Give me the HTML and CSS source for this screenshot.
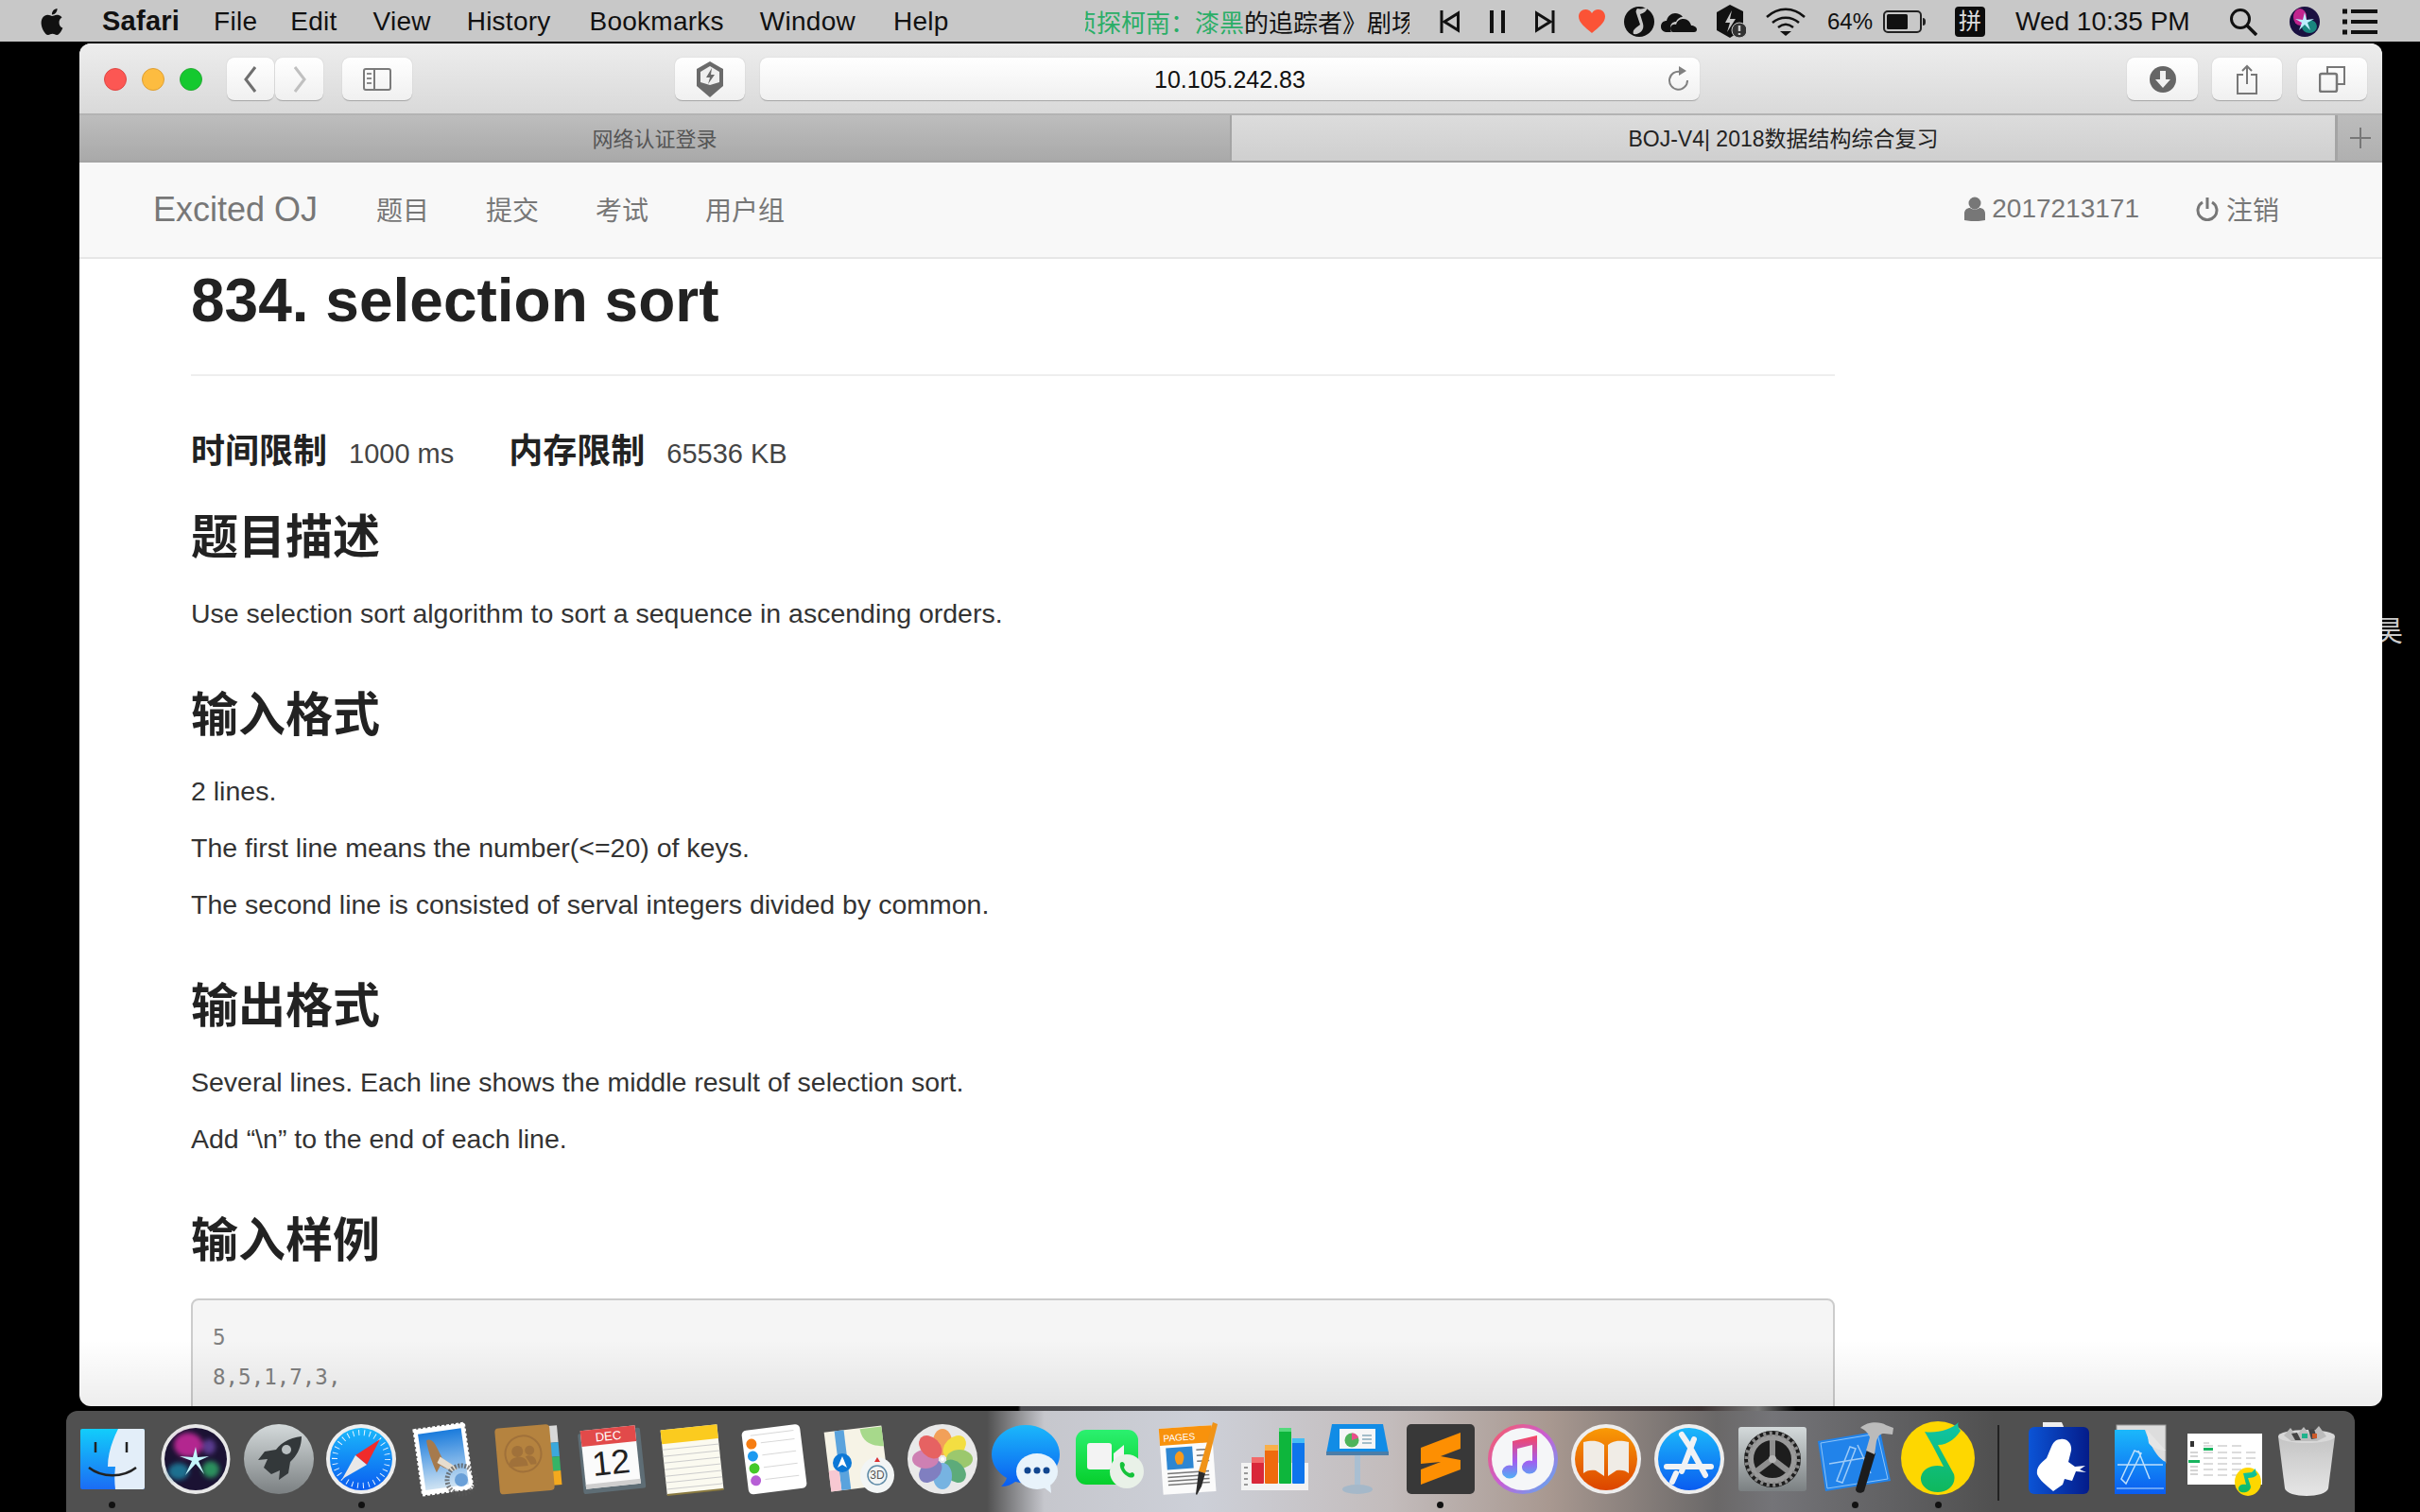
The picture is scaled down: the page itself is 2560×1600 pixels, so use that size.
FILE: index.html
```html
<!DOCTYPE html>
<html lang="en">
<head>
    <meta charset="UTF-8">
    <title>Excited OJ</title>
    <link rel="stylesheet" href="styles.css">
</head>
<body>

<svg class="defs" width="0" height="0">
    <defs>
        <linearGradient id="gFinder" x1="0" y1="0" x2="0" y2="1"><stop offset="0" stop-color="#12cdfb"/><stop offset="1" stop-color="#1b6cf4"/></linearGradient>
        <linearGradient id="gBlue" x1="0" y1="0" x2="0" y2="1"><stop offset="0" stop-color="#1bb8fb"/><stop offset="1" stop-color="#0a5cf0"/></linearGradient>
        <linearGradient id="gSky" x1="0" y1="0" x2="0" y2="1"><stop offset="0" stop-color="#1a7bdc"/><stop offset="1" stop-color="#cfe3f3"/></linearGradient>
        <linearGradient id="gSteel" x1="0" y1="0" x2="0" y2="1"><stop offset="0" stop-color="#d4dadb"/><stop offset="1" stop-color="#7b8082"/></linearGradient>
        <linearGradient id="gMusic" x1="0" y1="0" x2="1" y2="1"><stop offset="0" stop-color="#fb5c5c"/><stop offset=".5" stop-color="#c95ed6"/><stop offset="1" stop-color="#4fb5f5"/></linearGradient>
        <linearGradient id="gNote" x1="0" y1="0" x2="0" y2="1"><stop offset="0" stop-color="#f9455f"/><stop offset=".6" stop-color="#a35df0"/><stop offset="1" stop-color="#4fb0f5"/></linearGradient>
        <linearGradient id="gBook" x1="0" y1="0" x2="0" y2="1"><stop offset="0" stop-color="#f99a06"/><stop offset="1" stop-color="#dc4400"/></linearGradient>
        <linearGradient id="gGreen" x1="0" y1="0" x2="0" y2="1"><stop offset="0" stop-color="#2bf06f"/><stop offset="1" stop-color="#06cf2c"/></linearGradient>
        <linearGradient id="gQQ" x1="0" y1="0" x2="0" y2="1"><stop offset="0" stop-color="#10c4a8"/><stop offset="1" stop-color="#0fb85c"/></linearGradient>
        <linearGradient id="gFrog" x1="0" y1="0" x2="1" y2="0"><stop offset="0" stop-color="#0b54d6"/><stop offset="1" stop-color="#041c8a"/></linearGradient>
        <linearGradient id="gTrash" x1="0" y1="0" x2="0" y2="1"><stop offset="0" stop-color="#c4c4c4"/><stop offset="1" stop-color="#e6e6e6"/></linearGradient>
        <filter id="soft"><feGaussianBlur stdDeviation="2.500"/></filter>
    </defs>
</svg>

<!-- 顶部菜单栏 -->
<div class="menubar">
    <svg class="apple" viewBox="2 2 20 20"><path d="M18.71 19.5c-.83 1.24-1.71 2.45-3.05 2.47-1.34.03-1.77-.79-3.29-.79-1.53 0-2 .77-3.27.82-1.31.05-2.3-1.32-3.14-2.53C4.25 17 2.94 12.45 4.7 9.39c.87-1.52 2.43-2.48 4.12-2.51 1.28-.02 2.5.87 3.29.87.78 0 2.26-1.07 3.81-.91.65.03 2.47.26 3.64 1.98-.09.06-2.17 1.28-2.15 3.81.03 3.02 2.65 4.03 2.68 4.04-.03.07-.42 1.44-1.38 2.83M13 3.5c.73-.83 1.94-1.46 2.94-1.5.13 1.17-.34 2.35-1.04 3.19-.69.85-1.83 1.51-2.95 1.42-.15-1.15.41-2.35 1.05-3.11z"/></svg>
    <b class="app-name">Safari</b>
    <span class="m-file">File</span>
    <span class="m-edit">Edit</span>
    <span>View</span>
    <span>History</span>
    <span class="m-books">Bookmarks</span>
    <span>Window</span>
    <span class="m-help">Help</span>

    <div class="status">
        <div class="ticker"><span class="ticker-text"><em>侦探柯南：漆黑</em>的追踪者》剧场</span></div>
        <svg class="st st-prev" viewBox="0 0 21 24"><path d="M2 0v24" stroke="#111" stroke-width="3"/><path d="M19.5 3v18L5 12z" fill="none" stroke="#111" stroke-width="3"/></svg>
        <svg class="st st-pause" viewBox="0 0 16 24"><path d="M2 0v24M14 0v24" stroke="#111" stroke-width="4"/></svg>
        <svg class="st st-next" viewBox="0 0 21 24"><path d="M19 0v24" stroke="#111" stroke-width="3"/><path d="M1.5 3v18L16 12z" fill="none" stroke="#111" stroke-width="3"/></svg>
        <svg class="st st-heart" viewBox="0 0 28 26"><path d="M14 25C7 19 0 14 0 7.5 0 3 3.400 0 7.300 0 10 0 12.600 1.300 14 4 15.400 1.300 18 0 20.700 0 24.600 0 28 3 28 7.500 28 14 21 19 14 25z" fill="#fb5336"/></svg>
        <svg class="st st-qq" viewBox="0 0 32 32"><circle cx="16" cy="16" r="16" fill="#111"/><path d="M14 2c4 1 8 0 11-2-1 5-4 7-8 8l3 10c2 7-4 12-10 11-2-5 5-8 7-10l-4-12c-1-2 0-4 1-5z" fill="#c8c8c8"/></svg>
        <svg class="st st-cloud" viewBox="0 0 38 24"><path d="M7 23c-4 0-7-2-7-6s3-6 6-6c1-5 5-8 9-8 3 0 6 1 8 4-3 0-6 2-7 5-3 0-6 2-6 6 0 2 0 4 1 5z" fill="#111"/><path d="M13 23c-2 0-3-2-3-4 0-3 3-5 6-4 1-4 4-6 8-6s7 3 8 7c3 0 6 2 6 4s-1 3-3 3z" fill="#111"/></svg>
        <svg class="st st-shield" viewBox="0 0 32 36"><path d="M15 0l14 7v19l-14 9-14-8V8z" fill="#111"/><path d="M17 6l-7 13h5l-3 10 9-14h-6z" fill="#c8c8c8"/><circle cx="25" cy="27" r="8" fill="#333" stroke="#c8c8c8" stroke-width="1"/><path d="M25 22v6M25 30v2" stroke="#c8c8c8" stroke-width="2.500"/></svg>
        <svg class="st st-wifi" viewBox="0 0 42 30"><path d="M1 10c12-11 28-11 40 0M7 16c8-7 20-7 28 0M13 21c5-4 11-4 16 0" fill="none" stroke="#111" stroke-width="2.500"/><path d="M15 25h12l-6 5z" fill="#111"/></svg>
        <span class="st-pct">64%</span>
        <svg class="st st-batt" viewBox="0 0 45 24"><rect x="1" y="1" width="39" height="22" rx="4" fill="none" stroke="#222" stroke-width="2"/><rect x="4" y="4" width="22" height="16" rx="1.500" fill="#111"/><path d="M42 8c2 0 3 1 3 4s-1 4-3 4z" fill="#222"/></svg>
        <span class="st-input">拼</span>
        <span class="st-clock">Wed 10:35 PM</span>
        <svg class="st st-search" viewBox="0 0 30 30"><circle cx="12" cy="12" r="9.500" fill="none" stroke="#111" stroke-width="3"/><path d="M19 19l10 10" stroke="#111" stroke-width="3.500"/></svg>
        <svg class="st st-siri" viewBox="0 0 32 32"><circle cx="16" cy="16" r="16" fill="#1a1040"/><ellipse cx="11" cy="11" rx="7" ry="9" fill="#c2258f"/><ellipse cx="21" cy="21" rx="8" ry="7" fill="#19857e"/><path d="M16 6l2 8 8-1-7 4 3 8-6-6-6 6 3-8-7-4 8 1z" fill="#bdeeff"/></svg>
        <svg class="st st-list" viewBox="0 0 37 30"><path d="M9 4h28M9 15h28M9 26h28" stroke="#111" stroke-width="4"/><path d="M0 4h5M0 15h5M0 26h5" stroke="#111" stroke-width="5"/></svg>
    </div>
</div>

<div class="desktop">
    <div class="window">
        <!-- Safari 工具栏 -->
        <div class="toolbar">
            <i class="light light-red"></i>
            <i class="light light-yellow"></i>
            <i class="light light-green"></i>
            <button class="tool tool-back"><svg width="14" height="30" viewBox="0 0 14 30"><path d="M12 2L2 15l10 13" fill="none" stroke="#6f6f6f" stroke-width="3"/></svg></button>
            <button class="tool tool-fwd"><svg width="14" height="30" viewBox="0 0 14 30"><path d="M2 2l10 13L2 28" fill="none" stroke="#c0c0c0" stroke-width="3"/></svg></button>
            <button class="tool tool-side"><svg width="30" height="24" viewBox="0 0 30 24"><rect x="1" y="1" width="28" height="22" rx="2" fill="none" stroke="#7a7a7a" stroke-width="2"/><path d="M12 1v22" stroke="#7a7a7a" stroke-width="2"/><path d="M4 6h5M4 11h5M4 16h5" stroke="#8a8a8a" stroke-width="2"/></svg></button>
            <button class="tool tool-shield"><svg width="32" height="38" viewBox="0 0 32 38"><path d="M16 0l14 8v18l-14 12L2 26V8z" fill="#6a6a6a"/><path d="M16 5l10 6v11l-10 3-10-3V11z" fill="#efefef"/><path d="M18 7l-6 10h4l-2 7 7-10h-4z" fill="#6a6a6a"/></svg></button>
            <div class="address">
                <span class="url">10.105.242.83</span>
                <svg class="reload" width="24" height="28" viewBox="0 0 24 28"><path d="M15 6a9.500 9.500 0 1 0 7 9" fill="none" stroke="#808080" stroke-width="2"/><path d="M13 0l8 5-8 5z" fill="#808080"/></svg>
            </div>
            <button class="tool tool-down"><svg width="28" height="28" viewBox="0 0 28 28"><circle cx="14" cy="14" r="14" fill="#666"/><path d="M11 5h6v9h5l-8 9-8-9h5z" fill="#f0f0f0"/></svg></button>
            <button class="tool tool-share"><svg width="24" height="32" viewBox="0 0 24 32"><path d="M8 11H2v20h20V11h-6" fill="none" stroke="#777" stroke-width="2"/><path d="M12 2v19M7 7l5-5 5 5" fill="none" stroke="#777" stroke-width="2"/></svg></button>
            <button class="tool tool-tabs"><svg width="28" height="28" viewBox="0 0 28 28"><path d="M9 7V1h18v18h-7" fill="none" stroke="#777" stroke-width="2"/><rect x="1" y="8" width="18" height="19" rx="2" fill="none" stroke="#777" stroke-width="2.500"/></svg></button>
        </div>

        <!-- 标签栏 -->
        <div class="tabs">
            <div class="tab tab-off">网络认证登录</div>
            <div class="tab tab-on">BOJ-V4| 2018数据结构综合复习</div>
            <div class="tab-add"><svg width="22" height="22" viewBox="0 0 22 22"><path d="M11 0v22M0 11h22" stroke="#777" stroke-width="2"/></svg></div>
        </div>

        <!-- 站点导航 -->
        <div class="navbar">
            <span class="brand">Excited OJ</span>
            <span class="nav-item">题目</span>
            <span class="nav-item">提交</span>
            <span class="nav-item">考试</span>
            <span class="nav-item">用户组</span>
            <span class="nav-user">
                <svg width="22" height="26" viewBox="0 0 22 26"><circle cx="11" cy="7" r="6.500" fill="#777"/><path d="M0 25v-7c0-4 3-6 6-6 3 2 7 2 10 0 3 0 6 2 6 6v7c-6 1.500-16 1.500-22 0z" fill="#777"/></svg>
                2017213171
            </span>
            <span class="nav-logout">
                <svg width="24" height="26" viewBox="0 0 24 26"><path d="M7 6a10 10 0 1 0 10 0" fill="none" stroke="#777" stroke-width="3"/><path d="M12 1v12" stroke="#777" stroke-width="3"/></svg>
                注销
            </span>
        </div>

        <!-- 题目内容 -->
        <div class="page">
            <div class="problem">
                <h1>834. selection sort</h1>
                <div class="rule"></div>
                <div class="limits">
                    <b>时间限制</b><span class="limit-value">1000 ms</span>
                    <b>内存限制</b><span class="limit-value">65536 KB</span>
                </div>
                <h3 class="first">题目描述</h3>
                <p>Use selection sort algorithm to sort a sequence in ascending orders.</p>
                <h3>输入格式</h3>
                <p>2 lines.</p>
                <p>The first line means the number(&lt;=20) of keys.</p>
                <p>The second line is consisted of serval integers divided by common.</p>
                <h3>输出格式</h3>
                <p>Several lines. Each line shows the middle result of selection sort.</p>
                <p>Add “\n” to the end of each line.</p>
                <h3>输入样例</h3>
                <pre>5
8,5,1,7,3,
</pre>
            </div>
            <div class="fade"></div>
        </div>
    </div>
    <div class="side"><span>昊</span></div>
</div>

<div class="strip"></div>

<!-- Dock -->
<div class="dock">
    <div class="tile">
        <svg viewBox="0 0 88 78"><rect x="10" y="7" width="68" height="64" rx="2" fill="url(#gFinder)"/><path d="M50 7h26a2 2 0 0 1 2 2v60a2 2 0 0 1-2 2H47c-1-8-1-14 0-24h-8c0-14 5-28 11-40z" fill="#e3eef9"/><path d="M26 21v11M59 21v11" stroke="#222" stroke-width="2.500"/><path d="M19 48c14 11 36 11 50 0" fill="none" stroke="#222" stroke-width="2.500"/></svg>
        <i class="dot"></i>
    </div>
    <div class="tile">
        <svg viewBox="0 0 88 78"><ellipse cx="44" cy="39" rx="36.500" ry="37" fill="#e8e8e8"/><circle cx="44" cy="39" r="33" fill="#1b1233"/><g filter="url(#soft)"><ellipse cx="36" cy="24" rx="15" ry="13" fill="#b3278f"/><ellipse cx="60" cy="50" rx="9" ry="9" fill="#2a8f5d"/><ellipse cx="26" cy="52" rx="11" ry="9" fill="#1c6f8f"/><ellipse cx="58" cy="26" rx="7" ry="8" fill="#5a3a8f"/></g><path d="M44 26l2 11 12-1-11 5 6 14-9-11-11 12 7-15-13-5 14 1z" fill="#c4f5fb"/></svg>
    </div>
    <div class="tile">
        <svg viewBox="0 0 88 78"><circle cx="44" cy="39" r="37" fill="url(#gSteel)"/><path d="M68 15c-11 1-21 6-27 14l-12 2-7 9 10-1-4 9 8 7 9-4-1 10 10-7 2-12c8-7 12-17 12-27z" fill="#33383a"/><circle cx="52" cy="29" r="5" fill="#b9bfc1"/></svg>
    </div>
    <div class="tile">
        <svg viewBox="0 0 88 78"><circle cx="44" cy="39" r="37" fill="#eee"/><circle cx="44" cy="39" r="33" fill="url(#gBlue)"/><circle cx="44" cy="39" r="28" fill="none" stroke="#e6f2ff" stroke-width="6" stroke-dasharray="1 4.860"/><path d="M64 18L38 35l12 10z" fill="#f02b2b"/><path d="M24 60l14-25 12 10z" fill="#e8e8e8"/></svg>
        <i class="dot"></i>
    </div>
    <div class="tile">
        <svg viewBox="0 0 88 78"><g transform="rotate(-8 44 39)"><rect x="16" y="4" width="54" height="70" fill="#fff" stroke="#fff" stroke-width="2" stroke-dasharray="3 2"/><rect x="20" y="9" width="46" height="60" fill="url(#gSky)"/><path d="M28 17c4-2 8 2 10 9l4 12 14 13c-6 1-12-1-17-6l-5 7c-3-10-6-24-6-35z" fill="#a67a4d"/><path d="M40 36l17 15-7 2-14-11z" fill="#e6ddcf"/></g><circle cx="62" cy="61" r="15" fill="none" stroke="#555" stroke-width="5" stroke-dasharray="2 1.500" opacity=".75"/><circle cx="62" cy="61" r="7" fill="#6aa0d8"/></svg>
    </div>
    <div class="tile">
        <svg viewBox="0 0 88 78"><g transform="rotate(-5 44 39)"><rect x="65" y="6" width="13" height="18" fill="#d8d8d8"/><rect x="65" y="24" width="13" height="15" fill="#3ba8dc"/><rect x="65" y="39" width="13" height="15" fill="#36b466"/><rect x="65" y="54" width="13" height="15" fill="#f4a91e"/><rect x="12" y="4" width="58" height="70" rx="4" fill="#b5833f"/><circle cx="40" cy="33" r="19" fill="none" stroke="#a0713a" stroke-width="2"/><circle cx="34" cy="30" r="6" fill="#a0713a"/><path d="M24 46c0-8 5-10 10-10s10 2 10 10z" fill="#a0713a"/><circle cx="47" cy="30" r="5" fill="#a0713a"/><path d="M42 36c6-2 12 2 11 9h-6z" fill="#a0713a"/></g></svg>
    </div>
    <div class="tile">
        <svg viewBox="0 0 88 78"><g transform="rotate(-6 44 39)"><rect x="12" y="9" width="66" height="64" rx="2" fill="#5e6d75"/><rect x="15" y="6" width="58" height="62" fill="#fbfbfb"/><rect x="15" y="6" width="58" height="17" fill="#e24a4a"/><text class="ico-text ico-dec" x="44" y="19" text-anchor="middle">DEC</text><text class="ico-text ico-day" x="44" y="55" text-anchor="middle">12</text><rect x="15" y="63" width="58" height="5" fill="#cfcfcf"/></g></svg>
    </div>
    <div class="tile">
        <svg viewBox="0 0 88 78"><g transform="rotate(-6 44 39)"><rect x="13" y="5" width="60" height="69" fill="#fbfaf0"/><rect x="13" y="5" width="60" height="15" fill="#fbcb1f"/><path d="M13 26h60M13 33h60M13 40h60M13 47h60M13 54h60M13 61h60M13 68h60" stroke="#ccc" stroke-width="1"/><rect x="13" y="73" width="60" height="2" fill="#8a7a40"/></g></svg>
    </div>
    <div class="tile">
        <svg viewBox="0 0 88 78"><g transform="rotate(-7 44 39)"><rect x="11" y="5" width="62" height="68" rx="5" fill="#fff"/><circle cx="20" cy="20" r="5.500" fill="#f67d12"/><circle cx="20" cy="33" r="5.500" fill="#1d9af0"/><circle cx="20" cy="46" r="5.500" fill="#44c92a"/><circle cx="20" cy="59" r="5.500" fill="#b75fd6"/><path d="M30 20h36M30 33h36M30 46h36M30 59h36M20 11h46" stroke="#d8d8d8" stroke-width="1"/></g></svg>
    </div>
    <div class="tile">
        <svg viewBox="0 0 88 78"><g transform="rotate(-7 40 36)"><rect x="10" y="7" width="61" height="63" fill="#f6f3e6"/><path d="M48 8c1 13 8 19 23 21V8z" fill="#a7d98b"/><rect x="21" y="7" width="10" height="63" fill="#5aa3dd"/><path d="M10 48h11v22H10z" fill="#f7c8d2"/></g><circle cx="26" cy="43" r="10" fill="#0c78d6"/><path d="M26 36l5 12-5-3-5 3z" fill="#fff"/><ellipse cx="63" cy="56" rx="18" ry="19" fill="#f2f5f5"/><circle cx="63" cy="56" r="10" fill="none" stroke="#5e8ba8" stroke-width="1.500"/><text class="ico-text ico-3d" x="63" y="60" text-anchor="middle">3D</text><path d="M60 42h6l-3-5z" fill="#d33"/></svg>
    </div>
    <div class="tile">
        <svg viewBox="0 0 88 78"><ellipse cx="44" cy="39" rx="37" ry="37" fill="#e9e9e9"/><g opacity=".82"><ellipse cx="44" cy="21" rx="10" ry="14" fill="#f5913a"/><ellipse cx="44" cy="21" rx="10" ry="14" fill="#f6dc1e" transform="rotate(45 44 39)"/><ellipse cx="44" cy="21" rx="10" ry="14" fill="#8cc152" transform="rotate(90 44 39)"/><ellipse cx="44" cy="21" rx="10" ry="14" fill="#3f9e62" transform="rotate(135 44 39)"/><ellipse cx="44" cy="21" rx="10" ry="14" fill="#5fa8e0" transform="rotate(180 44 39)"/><ellipse cx="44" cy="21" rx="10" ry="14" fill="#6a68b8" transform="rotate(225 44 39)"/><ellipse cx="44" cy="21" rx="10" ry="14" fill="#c96aa8" transform="rotate(270 44 39)"/><ellipse cx="44" cy="21" rx="10" ry="14" fill="#e64545" transform="rotate(315 44 39)"/></g><circle cx="44" cy="39" r="2" fill="#fff"/></svg>
    </div>
    <div class="tile">
        <svg viewBox="0 0 88 78"><path d="M44 3C24 3 8 17 8 34c0 11 7 20 16 25-1 3-3 6-6 9 6 0 11-2 15-5 4 1 7 1 11 1 20 0 36-13 36-30S64 3 44 3z" fill="url(#gBlue)"/><ellipse cx="56" cy="52" rx="22" ry="19" fill="#e8f3fb"/><path d="M62 68l9 7-1-10z" fill="#e8f3fb"/><circle cx="46" cy="51" r="3.500" fill="#11468f"/><circle cx="56" cy="51" r="3.500" fill="#11468f"/><circle cx="66" cy="51" r="3.500" fill="#11468f"/></svg>
    </div>
    <div class="tile">
        <svg viewBox="0 0 88 78"><rect x="10" y="8" width="66" height="58" rx="11" fill="url(#gGreen)"/><rect x="22" y="22" width="26" height="28" rx="3" fill="#f3f3f3"/><path d="M50 33l11-9v26l-11-8z" fill="#f3f3f3"/><ellipse cx="64" cy="52" rx="18" ry="18" fill="#e9f1e8"/><path d="M57 43c2-2 4-1 5 2l-1 3c1 3 3 5 6 6l3-1c2 1 3 3 1 5-5 3-16-7-14-15z" fill="#14c23a"/></svg>
    </div>
    <div class="tile">
        <svg viewBox="0 0 88 78"><g transform="rotate(-4 40 38)"><rect x="12" y="5" width="56" height="70" fill="#fbfbfb"/><path d="M12 5h56v18H12z" fill="#f8920c"/><text class="ico-text ico-pages" x="16" y="19">PAGES</text><rect x="18" y="26" width="28" height="23" fill="#2d86d2"/><path d="M32 30c5 2 6 7 2 14h-5c-4-7-2-12 3-14z" fill="#f89a1c"/><path d="M18 53h44M18 57h44M18 61h44M18 65h44M50 30h13M50 36h13M50 42h13" stroke="#777" stroke-width="1.500"/></g><path d="M67 0l5 2-13 52-7-2z" fill="#f09317"/><path d="M52 52l7 2-4 14-5 9-1-1z" fill="#2b2b2b"/></svg>
    </div>
    <div class="tile">
        <svg viewBox="0 0 88 78"><rect x="9" y="43" width="71" height="29" fill="#f3f3f3"/><path d="M12 48h4M12 54h4M12 60h4M12 66h4" stroke="#999" stroke-width="2"/><rect x="20" y="37" width="13" height="28" rx="1" fill="#d9283a"/><rect x="20" y="37" width="13" height="6" fill="#f26a6a"/><rect x="34" y="24" width="14" height="41" rx="1" fill="#ef6a0d"/><rect x="34" y="24" width="14" height="6" fill="#f9b04a"/><rect x="49" y="6" width="13" height="59" rx="1" fill="#0eb63c"/><rect x="49" y="6" width="13" height="4" fill="#55d97c"/><rect x="63" y="17" width="13" height="48" rx="1" fill="#0e75ec"/><rect x="63" y="17" width="13" height="5" fill="#46bdf5"/></svg>
    </div>
    <div class="tile">
        <svg viewBox="0 0 88 78"><path d="M17 2h54l6 31H11z" fill="#118ce6"/><rect x="11" y="31" width="66" height="4" fill="#4a7da8"/><rect x="25" y="7" width="38" height="21" fill="#f6f6f6"/><circle cx="38" cy="19" r="7.500" fill="#4fb45a"/><path d="M38 19v-7.500a7.500 7.500 0 0 1 7 5z" fill="#e94f8a"/><path d="M49 14h10M49 18h10M49 22h10" stroke="#8ab" stroke-width="1.500"/><path d="M41 35h6v31h-6z" fill="#a9bfd2"/><ellipse cx="44" cy="71" rx="16" ry="5" fill="#a5b8c9"/></svg>
    </div>
    <div class="tile">
        <svg viewBox="0 0 88 78"><rect x="8" y="2" width="72" height="74" rx="5" fill="#383838"/><path d="M23 27L65 11V28L44 36 65 40V50L23 66V50L44 42 23 44z" fill="#fd8f02"/></svg>
        <i class="dot"></i>
    </div>
    <div class="tile">
        <svg viewBox="0 0 88 78"><circle cx="44" cy="39" r="37" fill="url(#gMusic)"/><circle cx="44" cy="39" r="33" fill="#f5f6f8"/><path d="M33 20l26-6v33a8 7 0 1 1-5-6V24l-16 4v24a8 7 0 1 1-5-6z" fill="url(#gNote)"/></svg>
    </div>
    <div class="tile">
        <svg viewBox="0 0 88 78"><circle cx="44" cy="39" r="37" fill="#eee"/><circle cx="44" cy="39" r="33" fill="url(#gBook)"/><path d="M42 24c-6-5-13-5-22-3v33c3-3 8-4 13-3l9 6z" fill="#f0ece6"/><path d="M46 24c6-5 13-5 22-3v33c-3-3-8-4-13-3l-9 6z" fill="#f0ece6"/></svg>
    </div>
    <div class="tile">
        <svg viewBox="0 0 88 78"><circle cx="44" cy="39" r="37" fill="#eee"/><circle cx="44" cy="39" r="33" fill="url(#gBlue)"/><path d="M44 25L36 13M44 25l17 31M36 52L49 18" stroke="#f0f2f5" stroke-width="6" stroke-linecap="round"/><path d="M20 47h47" stroke="#f0f2f5" stroke-width="6" stroke-linecap="round"/><path d="M30 54l-4 9" stroke="#f0f2f5" stroke-width="6" stroke-linecap="round"/></svg>
    </div>
    <div class="tile">
        <svg viewBox="0 0 88 78"><rect x="8" y="5" width="72" height="68" rx="3" fill="url(#gSteel)"/><circle cx="44" cy="39" r="30" fill="#1d1d1d"/><circle cx="44" cy="39" r="23" fill="none" stroke="#9a9a9a" stroke-width="6"/><circle cx="44" cy="39" r="27" fill="none" stroke="#8a8a8a" stroke-width="5" stroke-dasharray="3 3.500"/><path d="M44 39V19M44 39l-17 13M44 39l17 13" stroke="#8f8f8f" stroke-width="6"/><circle cx="44" cy="39" r="4" fill="#b5b5b5"/></svg>
    </div>
    <div class="tile">
        <svg viewBox="0 0 88 78"><path d="M4 20L70 9 81 62 12 73z" fill="#2183ea"/><path d="M7 22L67 12 78 60 14 70z" fill="none" stroke="#8fc4f6" stroke-width="1"/><path d="M16 44l48-8M24 62l14-36 6 2-14 36zM46 24l14 30" fill="none" stroke="#9ecbf7" stroke-width="1.500"/><path d="M56 29l9 4-12 40c-3 3-9 2-9-2z" fill="#1c1c1c"/><path d="M49 6C56-1 70-1 76 3l8 3-1 7-9-1c-4 0-6 2-8 8l-2 14-9-4 4-14c-2-5-5-8-10-10z" fill="#bbb"/></svg>
        <i class="dot"></i>
    </div>
    <div class="tile">
        <svg viewBox="0 0 88 78"><ellipse cx="44" cy="38" rx="39" ry="39" fill="#fed700"/><path d="M30 10C42 12 58 8 66 0 64 3 66 6 68 9 62 18 54 24 44 24L61 55C64 66 54 74 44 74 32 74 25 66 26 58 28 48 40 44 50 47L38 24z" fill="url(#gQQ)"/></svg>
        <i class="dot"></i>
    </div>
    <div class="dock-sep"></div>
    <div class="tile tile-right">
        <svg viewBox="0 0 88 78"><path d="M27 0h20l3 7H27z" fill="#eee"/><rect x="12" y="5" width="64" height="71" rx="6" fill="url(#gFrog)"/><path d="M46 18C52 17 58 22 57 30L54 42 61 47 72 46 66 50 73 53 62 52 58 62 50 60 48 66 38 73C30 66 24 62 21 55 20 48 24 44 31 38L36 26C38 21 41 18 46 18z" fill="#fff"/></svg>
    </div>
    <div class="tile tile-right">
        <svg viewBox="0 0 88 78"><rect x="18" y="3" width="52" height="40" fill="#ddd" stroke="#999" stroke-width="1"/><path d="M16 8H48C52 20 60 38 70 42V76H16z" fill="url(#gBlue)"/><path d="M50 8L52 22C56 28 66 30 70 30z" fill="#e5e5e5"/><path d="M19 45h48M23 60l14-30 7 3-16 32zM41 30l12 30" fill="none" stroke="#bfe0fb" stroke-width="1.500"/><path d="M18 70h50" stroke="#bfe0fb" stroke-width="1"/></svg>
    </div>
    <div class="tile tile-right">
        <svg viewBox="0 0 88 78"><rect x="5" y="12" width="79" height="54" fill="#fff"/><path d="M22 22h6M22 25h40M22 32h56M22 38h56M22 44h50M22 50h50M22 56h50" stroke="#b8b8b8" stroke-width="1" stroke-dasharray="10 5"/><rect x="6" y="40" width="12" height="3" fill="#19b45f"/><rect x="22" y="27" width="10" height="3" fill="#19b45f"/><path d="M8 20h4v6H8z" fill="#333"/><path d="M8 32h8M8 36h8M8 47h8M8 51h8M8 55h8" stroke="#aaa" stroke-width="1"/><g transform="translate(-3 -2)"><ellipse cx="72" cy="65" rx="14" ry="15" fill="#fed700"/><path d="M67 56l9-1 4-4c0 4 1 5 2 6-2 3-6 4-10 4l3 9c0 7-13 9-13 2 0-4 5-5 8-4z" fill="url(#gQQ)"/></g></svg>
    </div>
    <div class="tile tile-right">
        <svg viewBox="0 0 88 78"><path d="M14 15h60l-7 55c-1 5-12 8-23 8s-22-3-23-8z" fill="url(#gTrash)"/><ellipse cx="44" cy="15" rx="30" ry="7" fill="#d8d8d8"/><path d="M20 14l7-8 6 8 8-9 7 9 9-10 8 11-10 5H28z" fill="#bcbcbc"/><path d="M28 12l4 7h6l-4-8zM46 8l3 10 6-1-3-10z" fill="#444"/><path d="M39 12h6v5h-6z" fill="#1fb38c"/><path d="M50 12h5v5h-5z" fill="#cc5a2a"/></svg>
    </div>
</div>

</body>
</html>
```

FILE: styles.css
```css
* {
    margin: 0;
    padding: 0;
    box-sizing: border-box;
}

html, body {
    height: 100%;
    overflow: hidden;
}

body {
    background-color: #000;
    font-family: "Liberation Sans", "Noto Sans CJK SC", sans-serif;
    color: #333;
    display: flex;
    flex-direction: column;
}

.defs {
    position: absolute;
}

/* menu bar */
.menubar {
    height: 44px;
    margin-bottom: 2px;
    padding-top: 1px;
    background-color: #c8c8c8;
    color: #111;
    font-size: 28px;
    letter-spacing: 0.25px;
    display: flex;
    align-items: center;
    gap: 38px;
    flex-shrink: 0;
}

.app-name {
    font-size: 29px;
}

.m-file { margin-left: -2px; }
.m-edit { margin-left: -3px; }
.m-books { margin-left: 3px; }
.m-help { margin-left: 2px; }

.apple {
    width: 28px;
    height: 32px;
    margin-left: 41px;
    margin-right: 1px;
    fill: #111;
}

.status {
    margin-left: auto;
    width: 1412px;
    height: 44px;
    letter-spacing: 0;
    display: flex;
    align-items: center;
    flex-shrink: 0;
}

.ticker {
    width: 343px;
    font-size: 26px;
    overflow: hidden;
    white-space: nowrap;
    flex-shrink: 0;
}

.ticker-text {
    margin-left: -14px;
}

.ticker em {
    font-style: normal;
    color: #2aae67;
}

.st { flex-shrink: 0; }
.st-prev { width: 21px; height: 24px; margin-left: 32px; }
.st-pause { width: 16px; height: 24px; margin-left: 32px; }
.st-next { width: 21px; height: 24px; margin-left: 32px; }
.st-heart { width: 28px; height: 26px; margin-left: 25px; }
.st-qq { width: 32px; height: 32px; margin-left: 20px; }
.st-cloud { width: 38px; height: 24px; margin-left: 7px; }
.st-shield { width: 32px; height: 36px; margin-left: 20px; }
.st-wifi { width: 42px; height: 30px; margin-left: 21px; }
.st-pct { font-size: 24px; width: 50px; margin-left: 23px; }
.st-batt { width: 45px; height: 24px; margin-left: 9px; }
.st-input {
    width: 32px;
    height: 32px;
    margin-left: 31px;
    background-color: #0c0c0c;
    border-radius: 4px;
    color: #ddd;
    font-size: 24px;
    text-align: center;
    line-height: 32px;
}
.st-clock { width: 190px; margin-left: 32px; white-space: nowrap; }
.st-search { width: 30px; height: 30px; margin-left: 36px; }
.st-siri { width: 32px; height: 32px; margin-left: 34px; }
.st-list { width: 37px; height: 30px; margin-left: 24px; }

/* desktop row */
.desktop {
    height: 1442px;
    padding-left: 84px;
    display: flex;
    flex-shrink: 0;
}

.window {
    width: 2436px;
    border-radius: 12px;
    background-color: #fff;
    overflow: hidden;
    display: flex;
    flex-direction: column;
    flex-shrink: 0;
}

.side {
    width: 40px;
    padding-top: 604px;
    color: #ccc;
    font-size: 30px;
    line-height: 36px;
    overflow: hidden;
}

.side span {
    display: block;
    width: 30px;
    margin-left: -8px;
}

/* toolbar */
.toolbar {
    height: 76px;
    padding-left: 26px;
    padding-top: 2px;
    background: linear-gradient(#ededed, #d9d9d9);
    border-bottom: 2px solid #b3b3b3;
    display: flex;
    align-items: center;
    flex-shrink: 0;
}

.light {
    width: 24px;
    height: 24px;
    border-radius: 50%;
    margin-right: 16px;
}

.light-red { background-color: #fc5753; border: 1px solid #df4744; }
.light-yellow { background-color: #fdbc40; border: 1px solid #de9f34; }
.light-green { background-color: #14c92f; border: 1px solid #27aa35; }

.tool, .address {
    height: 46px;
    background: linear-gradient(#fff, #f0f0f0);
    border: 0;
    border-bottom: 1px solid #aaa;
    border-radius: 8px;
    box-shadow: 0 0 1px #aaa;
    display: flex;
    align-items: center;
    justify-content: center;
    flex-shrink: 0;
}

.tool-back { width: 50px; margin-left: 10px; }
.tool-fwd { width: 51px; margin-left: 1px; }
.tool-side { width: 74px; margin-left: 20px; }
.tool-shield { width: 74px; margin-left: 278px; }

.address {
    width: 994px;
    margin-left: 16px;
    padding-top: 2px;
    position: relative;
    color: #111;
    font-size: 25px;
}

.reload {
    position: absolute;
    right: 11px;
    top: 9px;
}

.tool-down { width: 75px; margin-left: 452px; }
.tool-share { width: 74px; margin-left: 15px; }
.tool-tabs { width: 74px; margin-left: 16px; }

/* tabs */
.tabs {
    height: 50px;
    background-color: #a4a4a4;
    padding-bottom: 2px;
    display: flex;
    font-size: 23px;
    flex-shrink: 0;
}

.tab {
    padding-bottom: 2px;
    display: flex;
    align-items: center;
    justify-content: center;
}

.tab-off {
    width: 1217px;
    background: linear-gradient(#bdbdbd, #a9a9a9);
    color: #555;
    font-size: 22px;
}

.tab-on {
    width: 1167px;
    margin-left: 2px;
    background: linear-gradient(#dcdcdc, #cfcfcf);
    color: #222;
}

.tab-add {
    width: 47px;
    margin-left: 3px;
    background: linear-gradient(#bcbcbc, #b0b0b0);
    display: flex;
    align-items: center;
    justify-content: center;
}

/* site navbar */
.navbar {
    height: 102px;
    padding-left: 78px;
    padding-bottom: 2px;
    background-color: #f8f8f8;
    border-bottom: 2px solid #e7e7e7;
    color: #777;
    font-size: 28px;
    display: flex;
    align-items: center;
    flex-shrink: 0;
}

.brand {
    width: 236px;
    padding-top: 2px;
    font-size: 36px;
}

.nav-item {
    margin-right: 60px;
}

.nav-user {
    margin-left: auto;
    display: flex;
    align-items: center;
    gap: 7px;
}

.nav-logout {
    margin-left: 60px;
    margin-right: 109px;
    display: flex;
    align-items: center;
    gap: 8px;
}

/* problem page */
.page {
    flex: 1;
    position: relative;
    overflow: hidden;
    padding-left: 118px;
}

.problem {
    width: 1739px;
}

h1 {
    margin-top: 9px;
    font-size: 64px;
    line-height: 70px;
    font-weight: bold;
    color: #222;
}

.rule {
    height: 2px;
    margin-top: 43px;
    background-color: #eee;
}

.limits {
    margin-top: 55px;
    font-size: 29px;
    line-height: 50px;
    display: flex;
    align-items: baseline;
}

.limits b {
    font-size: 36px;
    color: #222;
}

.limit-value {
    margin-left: 23px;
    margin-right: 58px;
    color: #444;
}

h3 {
    margin-top: 61px;
    margin-bottom: 32px;
    font-size: 50px;
    line-height: 55px;
    font-weight: bold;
    color: #222;
}

h3.first {
    margin-top: 37px;
}

p {
    font-size: 28.5px;
    line-height: 40px;
    margin-bottom: 20px;
}

pre {
    margin-top: 33px;
    padding: 18px 21px;
    height: 300px;
    background-color: #f5f5f5;
    border: 2px solid #ccc;
    border-radius: 8px;
    color: #808080;
    font-family: "DejaVu Sans Mono", monospace;
    font-size: 22.5px;
    line-height: 42px;
}

.fade {
    position: absolute;
    left: 0;
    right: 0;
    bottom: 0;
    height: 70px;
    background: linear-gradient(rgba(0, 0, 0, 0), rgba(0, 0, 0, 0.07));
}

/* strip of wallpaper between window and dock */
.strip {
    height: 5px;
    background: linear-gradient(90deg, #000 1077px, #4a4a4e 1080px, #5c5c60 1500px, #3a3030 1800px, #777 1860px, #000 1900px);
    flex-shrink: 0;
}

/* dock */
.dock {
    width: 2421px;
    height: 107px;
    margin-left: 70px;
    padding-left: 5px;
    padding-top: 12px;
    border-radius: 12px 12px 0 0;
    background: linear-gradient(90deg, #505050 0, #505050 974px, #c6c7cd 1035px, #cdd0d8 1200px, #c3bcbc 1400px, #a89890 1570px, #6a6868 1746px, #747478 1805px, #505050 2040px);
    display: flex;
    flex-shrink: 0;
}

.tile {
    width: 87.8px;
    flex-shrink: 0;
    display: flex;
    flex-direction: column;
    align-items: center;
}

.tile-right {
    width: 87.3px;
}

.tile svg {
    width: 88px;
    height: 78px;
    overflow: visible;
    flex-shrink: 0;
}

.dot {
    width: 7px;
    height: 7px;
    margin-top: 6px;
    border-radius: 50%;
    background-color: #111;
}

.dock-sep {
    width: 40px;
    height: 80px;
    margin-top: 3px;
    background: linear-gradient(#222, #222) center / 2px 100% no-repeat;
    flex-shrink: 0;
}

.ico-text {
    font-family: "Liberation Sans", sans-serif;
}

.ico-dec { font-size: 13px; fill: #fff; }
.ico-day { font-size: 36px; fill: #222; }
.ico-3d { font-size: 12px; fill: #555; }
.ico-pages { font-size: 10px; fill: #fff; }
```
